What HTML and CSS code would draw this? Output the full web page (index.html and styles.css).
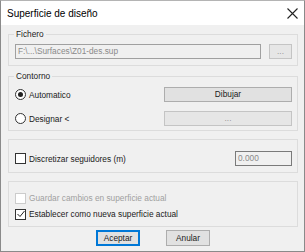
FILE: index.html
```html
<!DOCTYPE html>
<html lang="es">
<head>
    <meta charset="UTF-8">
    <title>Superficie de diseño</title>
    <link rel="stylesheet" href="styles.css">
</head>
<body>
    <div class="dialog">
        <div class="titlebar">
            <span class="title">Superficie de diseño</span>
            <svg class="close" width="11" height="11" viewBox="0 0 11 11">
                <path d="M0.5 0.5 L10.5 10.5 M10.5 0.5 L0.5 10.5" stroke="#222" stroke-width="1.1" fill="none"/>
            </svg>
        </div>
        <div class="content">
            <fieldset class="group">
                <legend>Fichero</legend>
                <div class="row">
                    <div class="field file disabled">F:\...\Surfaces\Z01-des.sup</div>
                    <button class="btn small" disabled>...</button>
                </div>
            </fieldset>

            <fieldset class="group">
                <legend>Contorno</legend>
                <div class="row option-row">
                    <label class="opt"><span class="radio checked"></span>Automatico</label>
                    <button class="btn wide">Dibujar</button>
                </div>
                <div class="row option-row">
                    <label class="opt"><span class="radio"></span>Designar &lt;</label>
                    <button class="btn wide" disabled>...</button>
                </div>
            </fieldset>

            <fieldset class="group plain discretize">
                <div class="row">
                    <label class="opt"><span class="check"></span>Discretizar seguidores (m)</label>
                    <div class="field num disabled">0.000</div>
                </div>
            </fieldset>

            <fieldset class="group plain options">
                <label class="opt disabled"><span class="check"></span>Guardar cambios en superficie actual</label>
                <label class="opt"><span class="check checked">
                    <svg width="10" height="10" viewBox="0 0 10 10"><path d="M1.5 5 L4 7.5 L8.5 2" stroke="#222" stroke-width="1" fill="none"/></svg>
                </span>Establecer como nueva superficie actual</label>
            </fieldset>

            <div class="actions">
                <button class="btn action default">Aceptar</button>
                <button class="btn action">Anular</button>
            </div>
        </div>
    </div>
</body>
</html>
```

FILE: styles.css
```css
body {
    margin: 0;
    padding: 0;
    font-family: "Liberation Sans", Arial, sans-serif;
    font-size: 8.3px;
    color: #1a1a1a;
    background: #ffffff;
}
.dialog {
    width: 305px;
    height: 252px;
    box-sizing: border-box;
    border: 1px solid #8a8a8a;
    border-top-color: #b4b4b4;
    background-color: #f0f0f0;
    display: flex;
    flex-direction: column;
}
.titlebar {
    height: 24px;
    background-color: #ffffff;
    display: flex;
    align-items: center;
    justify-content: space-between;
    padding: 0 6px 0 6px;
    flex-shrink: 0;
}
.title {
    font-size: 10px;
    color: #000;
}
.close {
    display: block;
}
.content {
    padding: 3px 6px 0 7px;
    display: flex;
    flex-direction: column;
}
/* Group boxes */
.group {
    margin: 0;
    border: 1px solid #dcdcdc;
    padding: 0 5px 0 6px;
    min-width: 0;
}
.group legend {
    padding: 0 2px;
    margin-left: -1px;
    line-height: 12px;
    color: #1a1a1a;
}
.group + .group {
    margin-top: 4px;
}
.group.plain {
    margin-top: 8px;
}
.row {
    display: flex;
    align-items: center;
    justify-content: space-between;
}
.group:first-child .row {
    padding: 4px 0 6px 0;
}
.option-row {
    padding: 0;
    margin-bottom: 9px;
}
.option-row:first-of-type {
    margin-top: 5px;
}
.option-row + .option-row {
    margin-bottom: 4px;
}
/* Fields */
.field {
    box-sizing: border-box;
    height: 15px;
    line-height: 13px;
    border: 1px solid #a0a0a0;
    background-color: #f0f0f0;
    padding: 0 2px;
    white-space: nowrap;
    overflow: hidden;
}
.field.disabled {
    color: #8a8a8a;
}
.field.file {
    width: 246px;
}
.field.num {
    width: 57px;
    border-color: #7a7a7a;
}
/* Buttons */
.btn {
    box-sizing: border-box;
    font-family: inherit;
    font-size: 8.3px;
    color: #1a1a1a;
    background-color: #e1e1e1;
    border: 1px solid #adadad;
    padding: 0;
    height: 15px;
    line-height: 13px;
    margin: 0;
}
.btn:disabled {
    color: #9a9a9a;
    border-color: #c4c4c4;
    background-color: #e6e6e6;
}
.btn.small {
    width: 23px;
}
.btn.wide {
    width: 128px;
}
.btn.action {
    width: 44px;
    height: 16px;
}
.btn.default {
    border-color: #0078d7;
    box-shadow: inset 0 0 0 1px #0078d7;
}
/* Radios and checkboxes */
.opt {
    display: flex;
    align-items: center;
    white-space: nowrap;
}
.opt.disabled {
    color: #a0a0a0;
}
.radio {
    box-sizing: border-box;
    width: 11px;
    height: 11px;
    border: 1px solid #333;
    border-radius: 50%;
    background: #fff;
    margin-right: 3px;
    display: flex;
    align-items: center;
    justify-content: center;
}
.radio.checked::after {
    content: "";
    width: 5px;
    height: 5px;
    border-radius: 50%;
    background: #222;
}
.check {
    box-sizing: border-box;
    width: 11px;
    height: 11px;
    border: 1px solid #333;
    background: #fff;
    margin-right: 3px;
    display: flex;
    align-items: center;
    justify-content: center;
}
.check svg {
    display: block;
    flex-shrink: 0;
}
.opt.disabled .check {
    border-color: #cccccc;
}
.discretize .row {
    padding: 11px 0 6px 0;
}
.options {
    padding-top: 10px;
    padding-bottom: 2px;
}
.options .opt {
    height: 12px;
    margin-bottom: 4px;
}
.actions {
    display: flex;
    justify-content: center;
    gap: 26px;
    margin-top: 3px;
}
```
